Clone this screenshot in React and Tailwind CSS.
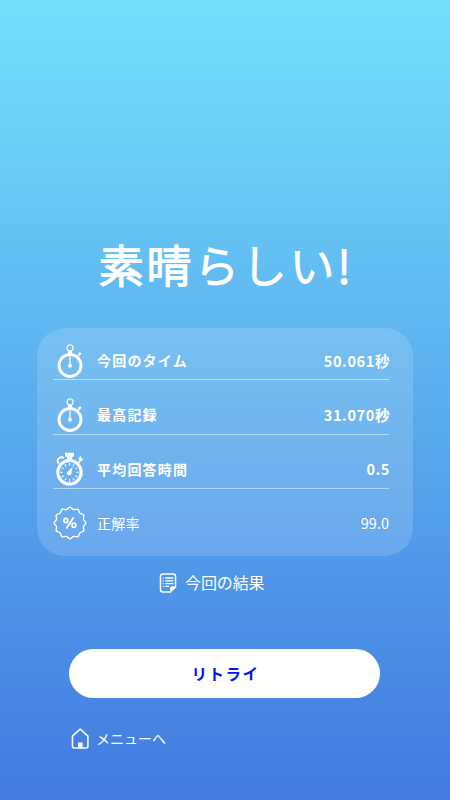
const stats = [
  { icon: StopwatchIcon, label: '今回のタイム', value: '50.061秒', bold: true },
  { icon: StopwatchIcon, label: '最高記録', value: '31.070秒', bold: true },
  { icon: TimerIcon, label: '平均回答時間', value: '0.5', bold: true },
  { icon: PercentIcon, label: '正解率', value: '99.0', bold: false },
];

function StopwatchIcon() {
  return (
    <svg viewBox="0 0 34 34" className="h-[34px] w-[34px]" fill="none" stroke="white">
      <circle cx="17" cy="3.9" r="3" strokeWidth="1.3" opacity="0.9" />
      <path d="M15 6.9h4v3.2h-4z" fill="white" stroke="none" />
      <circle cx="17" cy="21.5" r="11" strokeWidth="2.9" />
      <path d="M17 12.5v9" strokeWidth="1.6" opacity="0.8" />
      <circle cx="17" cy="21.7" r="2" fill="white" stroke="none" />
      <path d="M24.5 12.6l2-2.2" strokeWidth="1.3" />
      <path d="M24.7 9.9l2.2-1.9 1.7 1.7-2.2 2.1z" fill="white" stroke="none" />
    </svg>
  );
}

function TimerIcon() {
  const ticks = [0, 30, 60, 90, 120, 150, 180, 210, 240, 270, 300, 330];
  return (
    <svg viewBox="0 0 34 34" className="h-[34px] w-[34px]" fill="none" stroke="white">
      <path d="M12 0.7h9v3.9h-1.5v1.2H19v1.8h-5V5.8h-.5V4.600H12z" fill="white" stroke="none" />
      <circle cx="16.5" cy="20.3" r="11.7" strokeWidth="3" />
      {ticks.map((a) => (
        <path key={a} d="M16.5 11v2.5" strokeWidth="1" transform={`rotate(${a} 16.5 20.3)`} />
      ))}
      <path d="M19.6 15l-1.2 6.2a2.200 2.200 0 1 1-3.5-1.7z" fill="white" stroke="none" />
      <path d="M11 6C8 4.200 4.400 6 4.600 9.100c0 1.400.6 2.100 1.700 2.400" strokeWidth="1.8" />
      <path d="M24.8 11.4l2.100-2.500" strokeWidth="1.6" />
      <path d="M25.9 6.900l1.500-1.800.5 1.600 1.700.6-1.900 1.700z" fill="white" stroke="white" strokeWidth="1.2" />
    </svg>
  );
}

function PercentIcon() {
  // scalloped badge: twelve rounded points joined by shallow arcs
  const n = 12;
  const at = (r, deg) => {
    const t = ((deg - 90) * Math.PI) / 180;
    return `${(17 + r * Math.cos(t)).toFixed(2)} ${(17 + r * Math.sin(t)).toFixed(2)}`;
  };
  let d = `M${at(15.9, 0)}`;
  for (let i = 0; i < n; i++) {
    const a = (i * 360) / n;
    d += ` C${at(15.9, a + 5)} ${at(14, a + 8)} ${at(14, a + 15)}`;
    d += ` C${at(14, a + 22)} ${at(15.9, a + 25)} ${at(15.9, a + 30)}`;
  }
  return (
    <svg viewBox="0 0 34 34" className="h-[34px] w-[34px]" fill="none" stroke="white">
      <path d={`${d}z`} strokeWidth="1.4" strokeLinejoin="round" />
      <ellipse cx="12.8" cy="14.6" rx="1.9" ry="2.2" strokeWidth="1.7" />
      <ellipse cx="20.9" cy="19.2" rx="1.9" ry="2.2" strokeWidth="1.7" />
      <path d="M20.2 11.9l-6.5 10" strokeWidth="1.8" strokeLinecap="round" />
    </svg>
  );
}

function ResultIcon() {
  return (
    <svg viewBox="0 0 18 20" className="h-5 w-[18px]" fill="none" stroke="white" strokeLinecap="round" strokeLinejoin="round">
      <path d="M11.5 18.9H4a2.5 2.5 0 0 1-2.500-2.500V3.200A2.300 2.300 0 0 1 3.800.9h10.400a2.300 2.300 0 0 1 2.300 2.300v10.600z" strokeWidth="1.5" />
      <path d="M11.5 18.9v-3.300a1.800 1.800 0 0 1 1.800-1.800h3.200z" fill="white" strokeWidth="1" />
      <path d="M6.7 5h7M6.7 7.8h7M6.7 10.6h7M6.7 13.4h3" strokeWidth="1.3" />
      <path d="M4.2 5h.2M4.2 7.8h.2M4.2 10.6h.2M4.2 13.4h.2" strokeWidth="1.2" />
    </svg>
  );
}

function HomeIcon() {
  return (
    <svg viewBox="0 0 18 21" className="h-[21px] w-[18px]" fill="none" stroke="white" strokeLinejoin="round">
      <path d="M1.5 8.1L9.2 1l7.7 7.100v10.200a1.700 1.700 0 0 1-1.700 1.700H3.200a1.700 1.700 0 0 1-1.700-1.700z" strokeWidth="1.6" />
      <path d="M7 19.5v-5h4.600v5z" fill="white" stroke="none" />
    </svg>
  );
}

function StatRow({ icon: Icon, label, value, bold, last }) {
  return (
    <div className={`flex items-center ${last ? 'h-[53.5px] pt-[15px]' : 'h-[54.3px] border-b border-white/50 pt-4'}`}>
      <Icon />
      <div
        className={`ml-[10px] flex flex-1 items-center justify-between text-[14px] ${bold ? 'font-bold tracking-[1.2px]' : 'tracking-[0.2px]'}`}
      >
        <span>{label}</span>
        <span className={bold ? '-mr-[1px] text-[14.5px] tracking-[0.6px]' : 'text-[14.5px] tracking-[0px]'}>{value}</span>
      </div>
    </div>
  );
}

export default function App() {
  return (
    <main className="flex h-[800px] w-full flex-col overflow-hidden bg-linear-to-b/srgb from-[#74e0fc] to-[#417ae0] font-['Noto_Sans_CJK_JP',sans-serif] text-white">
      <h1 className="mt-[234px] ml-[99px] h-[60px] text-[44.5px] leading-[60px] font-light tracking-[3.2px] whitespace-nowrap [-webkit-text-stroke:2.1px_white] [stroke-linejoin:round]">
        素晴らしい!
      </h1>

      <section className="mt-[34px] ml-[37px] h-[228px] w-[376px] rounded-[28px] bg-white/15 pr-6 pl-4">
        <div className="-mt-[3px] pt-px">
          {stats.map((s, i) => (
            <StatRow key={s.label} {...s} last={i === stats.length - 1} />
          ))}
        </div>
      </section>

      <a className="mt-[17px] ml-[159px] flex h-5 items-center gap-[8px] text-[16px] tracking-[-0.1px]">
        <ResultIcon />
        <span className="-mt-0.5">今回の結果</span>
      </a>

      <button className="mt-14 ml-[69px] h-[49px] w-[311px] rounded-full bg-white pl-[2px] text-center text-[15.5px] font-bold tracking-[1.5px] text-[#0013f5]">
        リトライ
      </button>

      <a className="mt-[30px] ml-[71px] flex h-[21px] items-center gap-[7px] text-[14px]">
        <HomeIcon />
        メニューへ
      </a>
    </main>
  );
}
